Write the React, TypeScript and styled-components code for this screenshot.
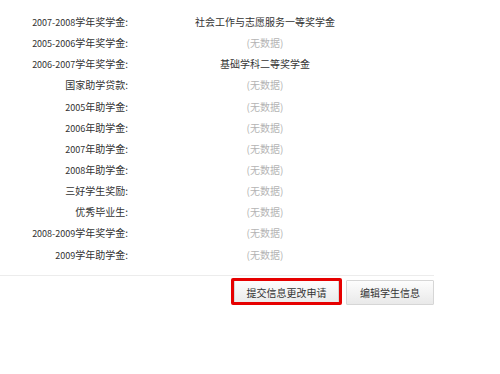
import React from "react";
import styled, { createGlobalStyle } from "styled-components";

const Global = createGlobalStyle`
  html, body { margin: 0; padding: 0; background: #fff; }
  body { font-family: "Noto Sans CJK SC", "Liberation Sans", sans-serif; font-size: 10px; color: #333; }
`;

const Page = styled.div`
  width: 434px;
  padding-top: 11px;
`;

const InfoTable = styled.div`
  display: grid;
  grid-template-columns: 130px 270px;
  grid-auto-rows: 21.15px;
  align-items: center;
`;

const Label = styled.div`
  text-align: right;
  padding-right: 2px;
  color: #333;
  white-space: nowrap;
`;

const Num = styled.span`
  font-size: 9px;
`;

const Value = styled.div<{ $empty?: boolean }>`
  text-align: center;
  color: ${(p) => (p.$empty ? "#b4b4b4" : "#333")};
  white-space: nowrap;
`;

const Divider = styled.div`
  margin-top: 10px;
  height: 1px;
  background: #ececec;
`;

const ButtonRow = styled.div`
  display: flex;
  justify-content: flex-end;
  gap: 7px;
  margin-top: 4px;
`;

const Highlight = styled.div`
  position: relative;
  display: flex;
  &::after {
    content: "";
    position: absolute;
    left: -3px;
    right: -3px;
    top: -2px;
    bottom: 0;
    border: 3px solid #e60000;
    border-radius: 2px;
    pointer-events: none;
  }
`;

const Button = styled.button<{ $width: number }>`
  width: ${(p) => p.$width}px;
  height: 25px;
  padding: 0;
  border: 1px solid #d6d6d6;
  border-radius: 1px;
  background: linear-gradient(#fdfdfd, #e9e9e9);
  color: #333;
  font-family: "Noto Sans CJK SC", "Liberation Sans", sans-serif;
  font-size: 10px;
  cursor: pointer;
`;

const rows: [string, string, string | null][] = [
  ["2007-2008", "学年奖学金:", "社会工作与志愿服务一等奖学金"],
  ["2005-2006", "学年奖学金:", null],
  ["2006-2007", "学年奖学金:", "基础学科二等奖学金"],
  ["", "国家助学贷款:", null],
  ["2005", "年助学金:", null],
  ["2006", "年助学金:", null],
  ["2007", "年助学金:", null],
  ["2008", "年助学金:", null],
  ["", "三好学生奖励:", null],
  ["", "优秀毕业生:", null],
  ["2008-2009", "学年奖学金:", null],
  ["2009", "学年助学金:", null],
];

export default function App() {
  return (
    <Page>
      <Global />
      <InfoTable>
        {rows.map(([num, label, value]) => (
          <React.Fragment key={num + label}>
            <Label>
              {num && <Num>{num}</Num>}
              {label}
            </Label>
            <Value $empty={value === null}>{value ?? "(无数据)"}</Value>
          </React.Fragment>
        ))}
      </InfoTable>
      <Divider />
      <ButtonRow>
        <Highlight>
          <Button $width={105}>提交信息更改申请</Button>
        </Highlight>
        <Button $width={88}>编辑学生信息</Button>
      </ButtonRow>
    </Page>
  );
}
